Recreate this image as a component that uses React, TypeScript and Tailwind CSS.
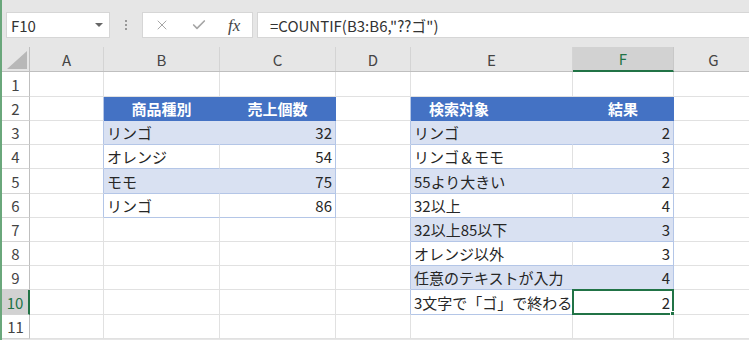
import { X, Check } from "lucide-react";

type Col = { key: string; w: string };

const COLS: Col[] = [
  { key: "A", w: "w-[74px]" },
  { key: "B", w: "w-[116px]" },
  { key: "C", w: "w-[116px]" },
  { key: "D", w: "w-[75px]" },
  { key: "E", w: "w-[162px]" },
  { key: "F", w: "w-[101px]" },
  { key: "G", w: "w-[80px]" },
];

const ROW_H = [
  "h-[25px]",
  "h-[24px]",
  "h-[24px]",
  "h-[24px]",
  "h-[25px]",
  "h-[24px]",
  "h-[24px]",
  "h-[24px]",
  "h-[24px]",
  "h-[25px]",
  "h-[24px]",
];

// cell values keyed by address
const DATA: Record<string, string> = {
  B2: "商品種別",
  C2: "売上個数",
  B3: "リンゴ",
  C3: "32",
  B4: "オレンジ",
  C4: "54",
  B5: "モモ",
  C5: "75",
  B6: "リンゴ",
  C6: "86",
  E2: "検索対象",
  F2: "結果",
  E3: "リンゴ",
  F3: "2",
  E4: "リンゴ＆モモ",
  F4: "3",
  E5: "55より大きい",
  F5: "2",
  E6: "32以上",
  F6: "4",
  E7: "32以上85以下",
  F7: "3",
  E8: "オレンジ以外",
  F8: "3",
  E9: "任意のテキストが入力",
  F9: "4",
  E10: "3文字で「ゴ」で終わる",
  F10: "2",
};

const TABLES = [
  { first: "B", last: "C", before: "A", top: 2, bottom: 6 },
  { first: "E", last: "F", before: "D", top: 2, bottom: 10 },
];

function cellStyle(col: string, row: number) {
  let bg = "bg-white";
  let br = "border-r-[#e1e1e1]";
  let bb = "border-b-[#e1e1e1]";
  let text = "text-[#262626] font-normal";
  let align = "justify-start pl-[3px]";
  for (const t of TABLES) {
    const inRows = row >= t.top && row <= t.bottom;
    if (!inRows) continue;
    if (col === t.before) br = "border-r-[#b4c6e7]";
    if (col !== t.first && col !== t.last) continue;
    const header = row === t.top;
    const band = !header && (row - t.top) % 2 === 1;
    if (header) {
      bg = "bg-[#4472c4]";
      bb = "border-b-[#4472c4]";
      text = "text-white font-bold";
      br = "border-r-[#4472c4]";
      align = col === "E" ? "justify-start pl-[18px]" : "justify-center";
    } else {
      bb = "border-b-[#b4c6e7]";
      if (band) {
        bg = "bg-[#d9e1f2]";
        br = col === t.last ? "border-r-[#b4c6e7]" : "border-r-[#d9e1f2]";
      } else {
        br = col === t.last ? "border-r-[#b4c6e7]" : "border-r-[#e1e1e1]";
      }
      if (col === t.last) align = "justify-end pr-[3px]";
    }
  }
  return `${bg} ${br} ${bb} ${text} ${align}`;
}

function FormulaBar() {
  return (
    <div className="flex h-[47px] items-start pt-[12px]">
      <div className="ml-[4px] flex h-[26px] w-[104px] shrink-0 items-center justify-between border border-[#d6d6d6] bg-white pl-[4px] pr-[6px]">
        <span className="text-[15px] leading-none text-[#333]">F10</span>
        <span className="h-0 w-0 border-x-[4px] border-t-[4px] border-x-transparent border-t-[#666]" />
      </div>
      <div className="flex h-[26px] w-[32px] shrink-0 flex-col items-center justify-center gap-[2px]">
        <span className="h-[2px] w-[2px] bg-[#999]" />
        <span className="h-[2px] w-[2px] bg-[#999]" />
        <span className="h-[2px] w-[2px] bg-[#999]" />
      </div>
      <div className="flex h-[26px] w-[111px] shrink-0 items-center border border-[#d6d6d6] bg-white">
        <X className="ml-[11px] h-[16px] w-[16px] text-[#a6a6a6]" strokeWidth={1.5} />
        <Check className="ml-[21px] h-[16px] w-[16px] text-[#a6a6a6]" strokeWidth={2.5} />
        <span className="ml-[21px] font-['Liberation_Serif',serif] text-[17px] italic leading-none text-[#444]">
          fx
        </span>
      </div>
      <div className="ml-[4px] flex h-[26px] flex-1 items-center border border-r-0 border-[#d6d6d6] bg-white pl-[12px]">
        <span className="text-[15px] leading-none text-[#333]">=COUNTIF(B3:B6,"??ゴ")</span>
      </div>
    </div>
  );
}

function ColumnHeaders() {
  return (
    <div className="flex h-[25px] border-b border-[#bfbfbf]">
      <div className="relative w-[28px] shrink-0 border-r border-[#bfbfbf]">
        <svg className="absolute bottom-[2px] right-[2px]" width="20" height="18" viewBox="0 0 20 18">
          <polygon points="20,0 20,18 0,18" fill="#b8b8b8" />
        </svg>
      </div>
      {COLS.map((c) => {
        const sel = c.key === "F";
        return (
          <div
            key={c.key}
            className={`${c.w} flex shrink-0 items-center justify-center border-r text-[15px] leading-none ${
              sel
                ? "-mb-[1px] border-b-2 border-r-[#c8c8c8] border-b-[#217346] bg-[#d2d2d2] text-[#217346]"
                : "border-r-[#d4d4d4] text-[#444]"
            }`}
          >
            {c.key}
          </div>
        );
      })}
    </div>
  );
}

function Row({ n }: { n: number }) {
  const sel = n === 10;
  return (
    <div className={`flex ${ROW_H[n - 1]}`}>
      <div
        className={`flex w-[28px] shrink-0 items-center justify-center border-b border-b-[#d4d4d4] text-[15px] leading-none ${
          sel
            ? "border-r-2 border-r-[#217346] bg-[#d2d2d2] text-[#217346]"
            : "border-r border-r-[#bfbfbf] text-[#444]"
        }`}
      >
        {n}
      </div>
      {COLS.map((c) => {
        const addr = `${c.key}${n}`;
        const active = addr === "F10";
        return (
          <div
            key={addr}
            className={`${c.w} relative flex shrink-0 items-center whitespace-nowrap border-b border-r text-[15px] leading-none ${cellStyle(
              c.key,
              n
            )}`}
          >
            {DATA[addr] ?? ""}
            {active && (
              <>
                <div className="absolute inset-[-1px] border-2 border-[#217346]" />
                <div className="absolute bottom-[-3px] right-[-3px] h-[6px] w-[6px] border border-white bg-[#217346]" />
              </>
            )}
          </div>
        );
      })}
    </div>
  );
}

export default function App() {
  return (
    <div className="h-[340px] w-[749px] overflow-hidden border-l-2 border-[#6aa77b] bg-[#e6e6e6] font-['Noto_Sans_CJK_JP','Noto_Sans',sans-serif]">
      <FormulaBar />
      <ColumnHeaders />
      <div className="bg-white">
        {ROW_H.map((_, i) => (
          <Row key={i} n={i + 1} />
        ))}
      </div>
    </div>
  );
}
